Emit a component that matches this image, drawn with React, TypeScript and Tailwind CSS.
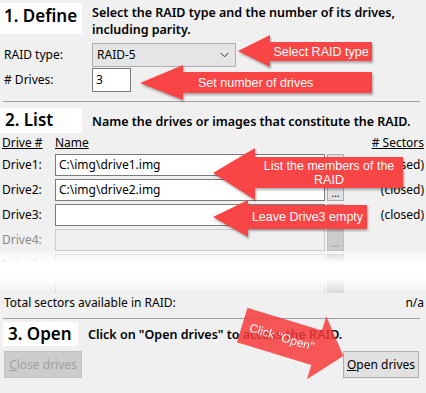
import { ReactNode } from 'react';

interface CalloutProps {
  className: string;
  points: string;
  w: number;
  h: number;
  textClassName: string;
  children: ReactNode;
}

// red annotation arrow drawn over the dialog
function Callout({ className, points, w, h, textClassName, children }: CalloutProps) {
  return (
    <div className={`absolute ${className}`}>
      <svg width={w} height={h} viewBox={`0 0 ${w} ${h}`} className="absolute inset-0 drop-shadow-[1px_2px_1px_rgba(0,0,0,0.3)]">
        <polygon points={points} fill="#f94545" />
      </svg>
      <div className={`absolute flex items-center text-white font-['Liberation_Sans',sans-serif] text-[12.5px] leading-[14px] ${textClassName}`}>
        {children}
      </div>
    </div>
  );
}

function DriveRow({ label, value, state }: { label: string; value?: string; state: 'on' | 'off' }) {
  const on = state === 'on';
  return (
    <div className="flex h-[22px] items-center mb-[3px]">
      <div className={`w-[55px] pl-[2px] ${on ? 'text-black' : 'text-[#8a8a8a]'}`}>{label}</div>
      <div
        className={`w-[270px] h-[22px] flex items-center pl-[3px] border ${
          on ? 'bg-white border-[#7a7a7a]' : 'bg-[#f0f0f0] border-[#cccccc]'
        }`}
      >
        {value}
      </div>
      <div
        className={`ml-[2px] w-[17px] h-[22px] flex items-end justify-center pb-[2px] text-[10px] leading-[10px] border ${
          on ? 'bg-[#e1e1e1] border-[#adadad] text-black' : 'bg-[#cccccc] border-[#bfbfbf] text-[#8a8a8a]'
        }`}
      >
        ...
      </div>
      <div className="flex-1 text-right pr-[2px]">{on ? '(closed)' : ''}</div>
    </div>
  );
}

export default function App() {
  return (
    <div className="relative w-[426px] h-[393px] overflow-hidden bg-[#f0f0f0] text-black font-['Noto_Sans',sans-serif] text-[12px]">
      {/* 1. Define */}
      <div className="flex h-[43px] pt-[3px]">
        <div className="w-[82px] h-[31px] bg-white pl-[4px] text-[17px] font-semibold leading-[26px]">1. Define</div>
        <div className="ml-[10px] w-[320px] pt-[1px] font-semibold text-[12.5px] leading-[17px]">
          Select the RAID type and the number of its drives, including parity.
        </div>
      </div>
      <div className="flex h-[24px] items-center">
        <div className="w-[92px] pl-[4px]">RAID type:</div>
        <div className="w-[144px] h-[24px] flex items-center justify-between pl-[4px] pr-[6px] bg-[#e5e5e5] border border-[#adadad]">
          <span>RAID-5</span>
          <svg width="9" height="6" viewBox="0 0 9 6">
            <path d="M0.5 0.8 L4.5 4.8 L8.5 0.8" fill="none" stroke="#333" strokeWidth="1" />
          </svg>
        </div>
      </div>
      <div className="flex h-[24px] items-center mt-[1px]">
        <div className="w-[92px] pl-[4px]"># Drives:</div>
        <div className="w-[39px] h-[24px] flex items-center pl-[3px] bg-white border border-[#7a7a7a]">3</div>
      </div>
      <div className="mt-[9px] ml-[3px] mr-[6px] border-t border-[#a0a0a0]" />

      {/* 2. List */}
      <div className="flex h-[25px] mt-[6px]">
        <div className="w-[82px] h-[25px] bg-white pl-[5px] text-[17px] font-semibold leading-[24px]">2. List</div>
        <div className="ml-[10px] pt-[5px] font-semibold text-[12.5px] leading-[17px]">
          Name the drives or images that constitute the RAID.
        </div>
      </div>
      <div className="flex h-[20px] items-center">
        <div className="w-[55px] pl-[2px] underline">Drive #</div>
        <div className="flex-1 underline">Name</div>
        <div className="pr-[2px] underline"># Sectors</div>
      </div>
      <div className="relative h-[139px] mt-[1px] overflow-hidden">
        <DriveRow label="Drive1:" value="C:\img\drive1.img" state="on" />
        <DriveRow label="Drive2:" value="C:\img\drive2.img" state="on" />
        <DriveRow label="Drive3:" state="on" />
        <DriveRow label="Drive4:" state="off" />
        <DriveRow label="Drive5:" state="off" />
        <DriveRow label="" state="off" />
        <div className="absolute left-0 right-0 top-[97px] h-[42px] bg-[linear-gradient(to_bottom,rgba(255,255,255,0.2)_0%,#fff_28%,#fff_64%,rgba(240,240,240,0.4)_100%)]" />
      </div>
      <div className="flex h-[18px] items-center justify-between mt-[1px]">
        <div className="pl-[4px]">Total sectors available in RAID:</div>
        <div className="pr-[2px]">n/a</div>
      </div>
      <div className="mt-[6px] ml-[3px] mr-[6px] border-t border-[#a0a0a0]" />

      {/* 3. Open */}
      <div className="flex h-[24px] mt-[3px]">
        <div className="ml-[3px] w-[75px] h-[24px] bg-white pl-[5px] text-[17px] font-semibold leading-[24px]">3. Open</div>
        <div className="ml-[10px] pt-[4px] font-semibold text-[12.5px] leading-[17px]">
          Click on "Open drives" to access the RAID.
        </div>
      </div>
      <div className="flex justify-between mt-[5px] pl-[4px] pr-[7px]">
        <div className="w-[78px] h-[27px] flex items-center justify-center bg-[#cccccc] border border-[#bfbfbf] text-[#a0a0a0]">
          <span><span className="underline">C</span>lose drives</span>
        </div>
        <div className="w-[76px] h-[27px] flex items-center justify-center bg-[#e1e1e1] border border-[#adadad]">
          <span><span className="underline">O</span>pen drives</span>
        </div>
      </div>

      {/* annotations */}
      <Callout
        className="left-[238px] top-[35px] w-[136px] h-[34px]"
        w={136}
        h={34}
        points="0,16 32,0 32,7 134,7 134,26 32,26 32,32"
        textClassName="left-[32px] right-[2px] top-[7px] h-[19px] justify-center"
      >
        Select RAID type
      </Callout>
      <Callout
        className="left-[140px] top-[65px] w-[234px] h-[37px]"
        w={234}
        h={37}
        points="0,18 43,0 43,7 232,7 232,28 43,28 43,35"
        textClassName="left-[58px] right-[2px] top-[7px] h-[21px]"
      >
        Set number of drives
      </Callout>
      <Callout
        className="left-[213px] top-[148px] w-[192px] h-[54px]"
        w={192}
        h={54}
        points="0,25 42,0 42,9 190,9 190,40 42,40 42,52"
        textClassName="left-[42px] right-[2px] top-[9px] h-[31px] justify-center text-center"
      >
        List the members of the
        <br />
        RAID
      </Callout>
      <Callout
        className="left-[213px] top-[200px] w-[156px] h-[39px]"
        w={156}
        h={39}
        points="0,17 35,0 35,5 154,5 154,29 35,29 35,37"
        textClassName="left-[35px] right-[2px] top-[5px] h-[24px] justify-center"
      >
        Leave Drive3 empty
      </Callout>
      <div className="absolute left-[242px] top-[292px] w-[106px] h-[66px] origin-[0_33px] rotate-[17deg] opacity-[0.85]">
        <svg width="106" height="66" viewBox="0 0 106 66" className="absolute inset-0">
          <polygon points="0,15 78,15 78,0 106,33 78,66 78,51 0,51" fill="#f93c3c" />
        </svg>
        <div className="absolute left-[8px] top-[15px] h-[36px] flex items-center text-white font-['Liberation_Sans',sans-serif] text-[12px]">
          Click "Open"
        </div>
      </div>
    </div>
  );
}
